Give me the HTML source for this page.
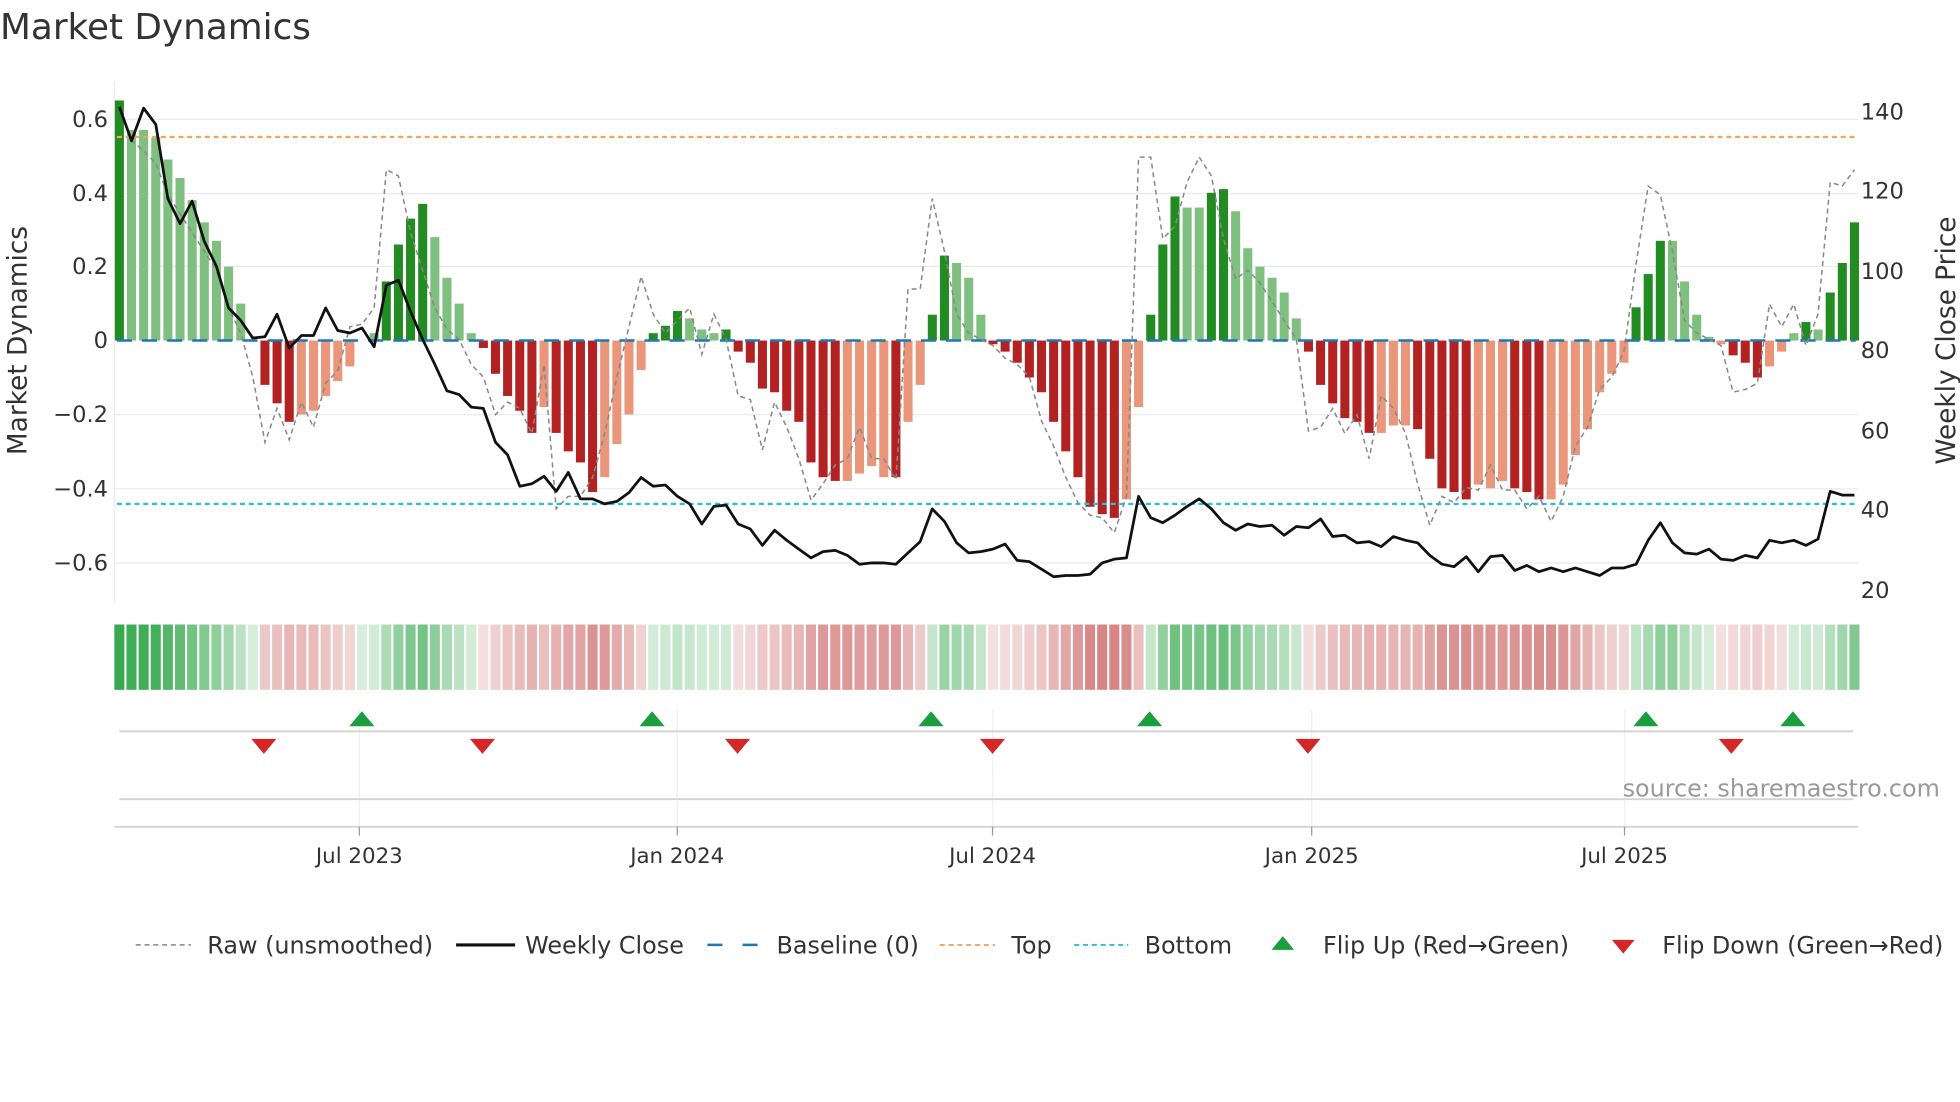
<!DOCTYPE html>
<html><head><meta charset="utf-8"><style>
html,body{margin:0;padding:0;background:#fff;}
svg{display:block;font-family:"DejaVu Sans","Liberation Sans",sans-serif;}
</style></head><body>
<svg id="s" width="1960" height="1102" viewBox="0 0 1560 877" xmlns="http://www.w3.org/2000/svg">
<rect width="1560" height="877" fill="#fff"/>
<text x="0" y="31" font-size="28.5" fill="#333">Market Dynamics</text>
<g id="grid" stroke="#e8ebf2" stroke-width="1">
<line x1="91" x2="1479" y1="95" y2="95"/><line x1="91" x2="1479" y1="154" y2="154"/><line x1="91" x2="1479" y1="212" y2="212"/><line x1="91" x2="1479" y1="330" y2="330"/><line x1="91" x2="1479" y1="389" y2="389"/><line x1="91" x2="1479" y1="448" y2="448"/>
<line x1="91" x2="91" y1="65" y2="480"/>
</g>
<g font-size="18" fill="#333" text-anchor="end">
<text x="86" y="101">0.6</text><text x="86" y="160">0.4</text><text x="86" y="218">0.2</text><text x="86" y="277">0</text><text x="86" y="336">−0.2</text><text x="86" y="395">−0.4</text><text x="86" y="454">−0.6</text>
</g>
<g font-size="18" fill="#333">
<text x="1481" y="95">140</text><text x="1481" y="158">120</text><text x="1481" y="222">100</text><text x="1481" y="285">80</text><text x="1481" y="349">60</text><text x="1481" y="412">40</text><text x="1481" y="476">20</text>
</g>
<text transform="translate(21,271) rotate(-90)" font-size="21" fill="#333" text-anchor="middle">Market Dynamics</text>
<text transform="translate(1556,271) rotate(-90)" font-size="21" fill="#333" text-anchor="middle">Weekly Close Price</text>
<g id="bars"></g>
<line x1="93" x2="1477" y1="271" y2="271" stroke="#1f77b4" stroke-width="2" stroke-dasharray="12,8"/>
<line x1="93" x2="1477" y1="109" y2="109" stroke="#f4a460" stroke-width="1.8" stroke-dasharray="4,3"/>
<line x1="93" x2="1477" y1="401" y2="401" stroke="#22c4d8" stroke-width="1.8" stroke-dasharray="4,3"/>
<polyline id="raw" fill="none" stroke="#888" stroke-width="1.2" stroke-dasharray="4,3"/>
<polyline id="close" fill="none" stroke="#111" stroke-width="2.2" stroke-linejoin="round"/>
<g id="strip"></g>
<g stroke="#eef0f4" stroke-width="1">
<line x1="286" x2="286" y1="565" y2="658"/><line x1="539" x2="539" y1="565" y2="658"/><line x1="790" x2="790" y1="565" y2="658"/><line x1="1044" x2="1044" y1="565" y2="658"/><line x1="1293" x2="1293" y1="565" y2="658"/>
</g>
<line x1="95" x2="1475" y1="582" y2="582" stroke="#d3d3d3" stroke-width="1.5"/>
<line x1="95" x2="1475" y1="636" y2="636" stroke="#d3d3d3" stroke-width="1.5"/>
<line x1="91" x2="1479" y1="658" y2="658" stroke="#d3d3d3" stroke-width="1.5"/>
<g stroke="#999" stroke-width="1"><line x1="286" x2="286" y1="658" y2="665"/><line x1="539" x2="539" y1="658" y2="665"/><line x1="790" x2="790" y1="658" y2="665"/><line x1="1044" x2="1044" y1="658" y2="665"/><line x1="1293" x2="1293" y1="658" y2="665"/></g>
<g id="marks"></g>
<g font-size="17" fill="#333" text-anchor="middle">
<text x="286" y="687">Jul 2023</text><text x="539" y="687">Jan 2024</text><text x="790" y="687">Jul 2024</text><text x="1044" y="687">Jan 2025</text><text x="1293" y="687">Jul 2025</text>
</g>
<text x="1544" y="634" font-size="19" fill="#999" text-anchor="end">source: sharemaestro.com</text>
<g font-size="19" fill="#333">
<line x1="108" x2="152" y1="752" y2="752" stroke="#888" stroke-width="1.2" stroke-dasharray="4,3"/>
<text x="165" y="759">Raw (unsmoothed)</text>
<line x1="363" x2="410" y1="752" y2="752" stroke="#111" stroke-width="2.5"/>
<text x="418" y="759">Weekly Close</text>
<line x1="563" x2="605" y1="752" y2="752" stroke="#1f77b4" stroke-width="2" stroke-dasharray="12,16"/>
<text x="618" y="759">Baseline (0)</text>
<line x1="748" x2="792" y1="752" y2="752" stroke="#f4a460" stroke-width="1.5" stroke-dasharray="4,3"/>
<text x="805" y="759">Top</text>
<line x1="855" x2="898" y1="752" y2="752" stroke="#22c4d8" stroke-width="1.5" stroke-dasharray="4,3"/>
<text x="911" y="759">Bottom</text>
<polygon points="1012,756 1030,756 1021,745" fill="#1a9e3f"/>
<text x="1053" y="759">Flip Up (Red→Green)</text>
<polygon points="1283,748 1301,748 1292,759" fill="#d62728"/>
<text x="1323" y="759">Flip Down (Green→Red)</text>
</g>
</svg>
<script>
var v=[.65,.57,.57,.55,.49,.44,.38,.32,.27,.20,.10,0,-.12,-.17,-.22,-.20,-.19,-.15,-.11,-.07,0,.02,.16,.26,.33,.37,.28,.17,.10,.02,
-.02,-.09,-.15,-.19,-.25,-.18,-.25,-.30,-.33,-.41,-.37,-.28,-.20,-.08,.02,.04,.08,.06,.03,.02,.03,
-.03,-.06,-.13,-.14,-.19,-.22,-.33,-.37,-.38,-.38,-.36,-.34,-.37,-.37,-.22,-.12,.07,.23,.21,.17,.07,
-.01,-.03,-.06,-.10,-.14,-.22,-.30,-.37,-.45,-.47,-.48,-.43,-.18,.07,.26,.39,.36,.36,.40,.41,.35,.25,.20,.17,.13,.06,
-.03,-.12,-.17,-.21,-.22,-.25,-.25,-.23,-.23,-.24,-.32,-.40,-.41,-.43,-.39,-.40,-.38,-.40,-.41,-.43,-.43,-.39,-.31,-.24,-.14,-.09,-.06,
.09,.18,.27,.27,.16,.07,.01,-.01,-.04,-.06,-.10,-.07,-.03,.02,.05,.03,.13,.21,.32];
var dark=[0,12,13,14,22,23,24,25,30,31,32,33,34,36,37,38,39,44,45,46,50,51,52,53,54,55,56,57,58,59,64,67,68,72,73,74,75,76,77,78,79,80,81,82,85,86,87,90,91,98,99,100,101,102,103,107,108,109,110,111,115,116,117,125,126,127,133,134,135,139,141,142,143];
var n=v.length,dx=(1476-95)/(n-1),b='',st='';
for(var i=0;i<n;i++){var x=95+dx*i,h=v[i]*294,d=dark.indexOf(i)>=0,c;
if(v[i]>0)c=d?'#228b22':'#7fbf7f';else c=d?'#b22222':'#e9967a';
if(Math.abs(h)>0.5)b+='<rect x="'+(x-3.6)+'" y="'+(h>0?271-h:271)+'" width="7.2" height="'+Math.abs(h)+'" fill="'+c+'"/>';
var a=Math.min(.9,.18+Math.abs(v[i])*1.2),sc=v[i]>=0?'rgba(34,160,60,'+a+')':'rgba(190,60,60,'+Math.min(.62,.15+Math.abs(v[i])*1.0)+')';
st+='<rect x="'+(x-4)+'" y="497" width="8" height="52" fill="'+sc+'"/>';}
document.getElementById('bars').innerHTML=b;document.getElementById('strip').innerHTML=st;
var cl=[85,112,86,99,158,178,160,192,212,245,255,269,268,250,277,267,267,245,263,265,261,276,227,223,248,270,290,311,314,324,325,352,362,387,385,379,391,376,397,397,401,399,392,380,387,386,395,401,417,403,402,417,421,434,422,430,437,444,439,438,442,449,448,448,449,440,431,405,415,432,440,439,437,433,446,447,453,459,458,458,457,448,445,444,395,412,416,410,403,397,405,416,422,417,419,418,426,419,420,413,427,426,432,431,435,427,430,432,442,449,451,443,455,443,442,454,450,455,452,455,452,455,458,452,452,449,430,416,432,440,441,437,445,446,442,444,430,432,430,434,429,391,394,394];
var rw=[85,112,120,130,155,170,185,200,215,245,265,300,352,325,350,320,340,305,295,260,258,245,135,140,185,215,245,262,270,290,300,330,320,325,345,290,405,395,395,380,345,300,260,220,250,265,255,245,282,250,270,315,318,358,320,340,365,398,385,370,365,340,365,365,382,230,230,158,200,250,265,270,275,285,290,300,335,355,380,400,410,412,424,395,125,125,190,180,145,125,140,190,222,215,225,240,255,270,343,340,325,345,330,365,315,325,345,385,418,395,400,388,390,370,390,390,405,395,415,395,355,340,310,300,280,210,148,155,200,255,265,270,275,312,310,305,242,260,242,275,250,145,148,135];
function pts(a){var s='',m=a.length,d=(1476-95)/(m-1);for(var i=0;i<m;i++)s+=(95+d*i).toFixed(1)+','+a[i]+' ';return s;}
document.getElementById('close').setAttribute('points',pts(cl));document.getElementById('raw').setAttribute('points',pts(rw));
var mk='';[288,519,741,915,1310,1427].forEach(function(x){mk+='<polygon points="'+(x-10)+',578 '+(x+10)+',578 '+x+',566" fill="#1a9e3f"/>';});
[210,384,587,790,1041,1378].forEach(function(x){mk+='<polygon points="'+(x-10)+',588 '+(x+10)+',588 '+x+',600" fill="#d62728"/>';});
document.getElementById('marks').innerHTML=mk;
</script>
</body></html>
